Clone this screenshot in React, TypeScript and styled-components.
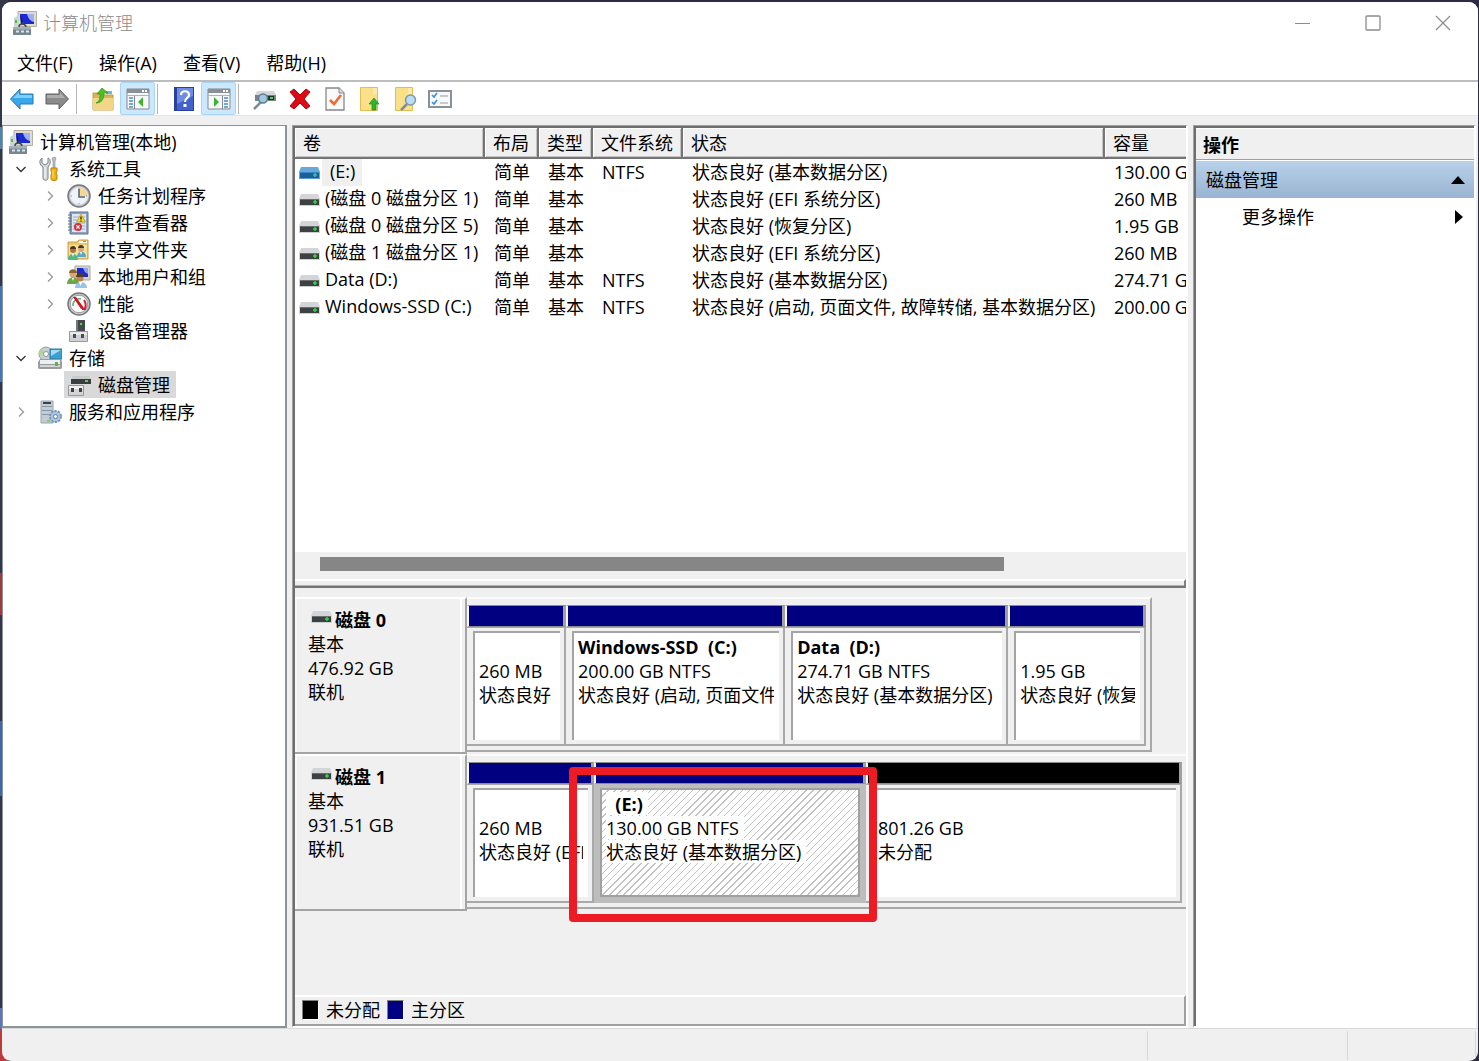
import React from "react";
import styled, { createGlobalStyle, css } from "styled-components";

const GlobalStyle = createGlobalStyle`
  * { box-sizing: border-box; }
  html, body { margin: 0; padding: 0; }
  body {
    font: 18px/24px "Open Sans", "Noto Sans CJK SC", sans-serif;
    color: #000;
    background: #2f3047;
  }
  button {
    font: inherit;
    color: inherit;
    background: none;
    border: 0;
    padding: 0;
    margin: 0;
    text-align: left;
  }
  svg { display: block; flex: none; }
  ul { list-style: none; margin: 0; padding: 0; }
`;

/* ---------- window frame ---------- */

const Desktop = styled.div`
  display: flex;
  min-height: 100vh;
  padding: 2px 1px 0 2px;
  background: linear-gradient(
    #34364c 0 12%, #4a86b4 12% 14%, #34364c 14% 27%, #3c78b8 27% 36%, #34364c 36% 54%,
    #a33a3a 54% 58%, #34364c 58% 68%, #3a68a8 68% 75%, #34364c 75% 95%, #5a78b8 95% 97%, #c03a3a 97%
  ) left / 8px 100% no-repeat, #2b2c42;
`;

const Window = styled.div`
  flex: 1;
  min-width: 0;
  display: flex;
  flex-direction: column;
  background: #f0f0f0;
  border-radius: 9px;
  overflow: hidden;
`;

const TitleBar = styled.header`
  display: flex;
  align-items: center;
  height: 42px;
  padding-left: 11px;
  background: #fff;
`;

const Title = styled.h1`
  flex: 1;
  margin: 0;
  padding-left: 6px;
  font-size: 18px;
  font-weight: 300;
  color: #8c8c8c;
`;

const CaptionButton = styled.button`
  width: 70px;
  height: 42px;
  display: flex;
  align-items: center;
  justify-content: center;
`;

const MenuBar = styled.nav`
  display: flex;
  height: 38px;
  padding: 2px 2px 0;
  background: #fff;
  border-bottom: 2px solid #bdbdbd;
`;

const MenuButton = styled.button`
  padding: 0 13px;
`;

const ToolBar = styled.div`
  display: flex;
  align-items: center;
  height: 34px;
  padding-left: 2px;
  background: #fff;
  border-bottom: 1px solid #e6e6e6;
`;

const ToolButton = styled.button<{ $on?: boolean }>`
  width: 35px;
  height: 33px;
  display: flex;
  align-items: center;
  justify-content: center;
  border-radius: 2px;
  padding-top: 1px;
  ${(p) => p.$on && css`
    background: #cce8ff;
    border: 1px solid #a9d6f8;
  `}
`;

const ToolSeparator = styled.span`
  width: 1px;
  height: 30px;
  margin: 0 8px 0 2px;
  background: #b4b4b4;
`;

const Workspace = styled.main`
  flex: 1;
  display: flex;
  align-items: stretch;
  min-height: 0;
  padding: 9px 2px 0 0;
`;

const StatusBar = styled.footer`
  display: flex;
  height: 33px;
  padding: 2px 2px 1px 0;
  border-top: 1px solid #dadada;
`;

const StatusCell = styled.div<{ $width?: number }>`
  ${(p) => (p.$width ? `width: ${p.$width}px;` : "flex: 1;")}
  border-right: 1px solid #d8d8d8;
`;

/* ---------- tree ---------- */

const TreePane = styled.aside`
  width: 285px;
  flex: none;
  background: #fff;
  border: 2px solid #8e939b;
  border-left-width: 1px;
  border-top-width: 1px;
  padding: 2px 0 0 6px;
`;

const TreeRow = styled.li<{ $level: number }>`
  display: flex;
  align-items: center;
  height: 27px;
  padding-left: ${(p) => (p.$level > 1 ? 29 : 0)}px;
`;

const TreeToggle = styled.button`
  width: 29px;
  height: 27px;
  padding-left: 6px;
  display: flex;
  align-items: center;
`;

const ToggleSpace = styled.span`
  width: 29px;
`;

const TreeLabel = styled.button<{ $selected?: boolean }>`
  display: flex;
  align-items: center;
  gap: 7px;
  height: 27px;
  padding: 0 6px 0 3px;
  margin-left: -3px;
  white-space: nowrap;
  background: ${(p) => (p.$selected ? "#d9d9d9" : "transparent")};
`;

/* ---------- middle pane ---------- */

const Sunken = styled.section`
  border: 1px solid #a0a0a0;
  border-right: 2px solid #fff;
  border-bottom: 2px solid #fff;
  box-shadow: inset 2px 2px 0 #6e6e6e;
  padding: 2px 0 0 2px;
  display: flex;
  flex-direction: column;
`;

const CenterPane = styled(Sunken)`
  flex: 1;
  min-width: 0;
  margin: 0 5px;
`;

const ListArea = styled.div`
  height: 424px;
  overflow: hidden;
  background: #fff;
`;

const VolumeTable = styled.table`
  table-layout: fixed;
  width: 960px;
  border-collapse: separate;
  border-spacing: 0;
`;

const HeadCell = styled.th`
  height: 31px;
  padding: 0 0 0 8px;
  font-weight: 400;
  text-align: left;
  white-space: nowrap;
  background: #f0f0f0;
  border-right: 2px solid #757575;
  border-bottom: 2px solid #757575;
  box-shadow: inset 1px 1px 0 #fff, inset -1px -1px 0 #c4c4c4;
`;

const Cell = styled.td`
  height: 27px;
  padding: 0 0 2px 9px;
  white-space: nowrap;
`;

const NameCell = styled(Cell)`
  padding: 0 0 0 4px;
`;

const VolumeName = styled.span<{ $selected?: boolean }>`
  display: flex;
  align-items: center;
  height: 27px;
  gap: 2px;

  span {
    padding: 0 7px 3px ${(p) => (p.$selected ? 8 : 3)}px;
    background: ${(p) => (p.$selected ? "#f0f0f0" : "transparent")};
  }
`;

const ScrollTrack = styled.div`
  height: 27px;
  padding: 5px 182px 0 25px;
`;

const ScrollThumb = styled.div`
  height: 14px;
  background: #868686;
`;

const Splitter = styled.div`
  height: 9px;
  border-top: 2px solid #fff;
  border-right: 2px solid #808080;
  border-bottom: 2px solid #757575;
  box-shadow: inset 0 -1px 0 #b0b0b0;
`;

const DiskArea = styled.div`
  flex: 1;
  padding-top: 9px;
`;

const DiskRow = styled.article`
  display: flex;
  height: 157px;
`;

const DiskLabel = styled.div`
  width: 172px;
  flex: none;
  padding: 9px 0 0 13px;
  border-top: 2px solid #fff;
  border-bottom: 2px solid #a4a4a4;
  border-right: 2px solid #a4a4a4;
  box-shadow: inset 2px 0 0 #fafafa, inset -3px 0 0 #f0f0f0, inset -5px 0 0 #fff;
`;

const DiskName = styled.h2`
  display: flex;
  align-items: center;
  gap: 3px;
  margin: 0;
  padding-left: 3px;
  font-size: 18px;
  line-height: 24px;
  font-weight: 700;

  svg { margin-bottom: 6px; }
`;

const Line = styled.div`
  height: 24px;
  white-space: pre;
`;

const TrackSlot = styled.div`
  flex: 1;
  min-width: 0;
  display: flex;
`;

const TrackRest = styled.div<{ $share: number }>`
  flex: ${(p) => p.$share} 1 0;
`;

const Track = styled.div<{ $share: number; $closed?: boolean }>`
  display: flex;
  flex: ${(p) => p.$share} 1 0;
  min-width: 0;
  height: 155px;
  padding: 6px 4px 4px 0;
  border-top: 2px solid #fbfbfb;
  border-bottom: 2px solid #a8a8a8;
  border-right: ${(p) => (p.$closed ? "2px solid #a8a8a8" : "0")};
`;

const Partition = styled.div<{ $share: number }>`
  position: relative;
  flex: ${(p) => p.$share} 1 0;
  min-width: 0;
  display: flex;
  flex-direction: column;
`;

const PartitionBar = styled.div<{ $color: string }>`
  height: 22px;
  flex: none;
  background: ${(p) => p.$color};
  border: 1px solid #8c8c8c;
  border-left: 2px solid #f7f7f7;
  border-right: 3px solid #a0a0a0;
`;

const PartitionBody = styled.div<{ $selected?: boolean }>`
  flex: 1;
  min-height: 0;
  display: flex;
  padding: 3px 4px 4px 6px;
  border-top: 1px solid #a8a8a8;
  border-right: 2px solid #a8a8a8;
  border-bottom: 2px solid #a8a8a8;
  background: #f0f0f0;
  ${(p) => p.$selected && css`
    background: #bdbdbd;
    border-color: #bdbdbd;
  `}
`;

const PartitionFace = styled.div<{ $selected?: boolean }>`
  flex: 1;
  min-width: 0;
  padding: 2px 5px 0 4px;
  background: #fff;
  border-top: 2px solid #a4a4a4;
  border-left: 2px solid #a4a4a4;
  ${(p) => p.$selected && css`
    border: 2px solid #a0a0a0;
    background: repeating-linear-gradient(135deg, #fff 0 4px, #c2c2c2 4px 5px);
  `}
`;

const PartitionText = styled.div<{ $selected?: boolean }>`
  overflow: hidden;

  span { background: ${(p) => (p.$selected ? "#fff" : "transparent")}; }
  ${(p) => p.$selected && css`
    span { display: inline-block; height: 23px; padding-right: 5px; line-height: 24px; }
  `}
`;

const Strong = styled.strong`
  font-weight: 700;
`;

/* Hand-drawn marker laid over the highlighted partition. */
const Marker = styled.div`
  position: absolute;
  z-index: 2;
  inset: 5px -11px -19px -25px;
  border: 8px solid #ed1c24;
  border-radius: 4px;
  pointer-events: none;
`;

const Legend = styled.div`
  display: flex;
  align-items: center;
  gap: 7px;
  height: 31px;
  padding: 0 0 1px 7px;
  border-top: 2px solid #fff;
  border-right: 2px solid #a0a0a0;
  border-bottom: 2px solid #a0a0a0;
`;

const Swatch = styled.span<{ $color: string }>`
  width: 17px;
  height: 20px;
  background: ${(p) => p.$color};
  border: 1px solid #808080;
  border-right-color: #fff;
  border-bottom-color: #fff;
`;

/* ---------- actions pane ---------- */

const ActionsPane = styled(Sunken)`
  width: 283px;
  flex: none;
  background: #fff;
`;

const ActionsTitle = styled.h2`
  margin: 0;
  height: 32px;
  padding: 4px 0 0 7px;
  font-size: 18px;
  line-height: 24px;
  font-weight: 700;
  background: #f0f0f0;
  border-top: 1px solid #fff;
  border-bottom: 1px solid #a0a0a0;
`;

const ActionGroup = styled.button`
  display: flex;
  align-items: center;
  justify-content: space-between;
  height: 37px;
  margin-top: 1px;
  padding: 1px 9px 0 10px;
  background: linear-gradient(#b9d1ea, #99b4d1);
`;

const ActionItem = styled.button`
  display: flex;
  align-items: center;
  justify-content: space-between;
  height: 36px;
  padding: 1px 11px 0 46px;
`;

/* ---------- icons ---------- */

type IconProps = { children: React.ReactNode; w?: number; h?: number };
const Icon = ({ children, w = 24, h = 24 }: IconProps) => (
  <svg width={w} height={h} viewBox={`0 0 ${w} ${h}`} aria-hidden="true">{children}</svg>
);

const ComputerIcon = () => (
  <Icon>
    <path d="M5 .5h18.500v15H8l-3-2z" fill="#dedbcf" stroke="#b3b0a6" />
    <path d="M7 3h14v10H8z" fill="#1a2ad0" />
    <path d="M14 3h7v8c-4-1-6-4-7-8z" fill="#9db0f6" />
    <path d="M7 3l4 10H8z" fill="#0c1490" />
    <path d="M1 7l5-3v12H1z" fill="#cdd3d7" />
    <path d="M2 9h2v3H2z" fill="#4fc62c" />
    <path d="M6 16c0-4 6-4 7 0M9 11l4 4" fill="none" stroke="#3a4650" strokeWidth="1.500" />
    <path d="M0 16h18v8H0z" fill="#768791" />
    <path d="M0 16h18v2.500H0z" fill="#a5b1b9" />
    <path d="M3 19.500h3v2H3zm5 0h3v2H8zm5 0h3v2h-3z" fill="#dce3e7" />
  </Icon>
);

const ToolsIcon = () => (
  <Icon>
    <path d="M4 1v5l3 2 3-2V1c3 1 3 6 0 9v11c0 3-5 3-5 0V10C1 8 1 3 4 1z" fill="#d5d8da" stroke="#7c8286" />
    <path d="M7 10v11" stroke="#f7f8f8" />
    <path d="M15 0h2l1 2-1 2v7h-2V4l-1-2z" fill="#b9bec2" stroke="#868b8f" strokeWidth=".6" />
    <path d="M13 11h6v3l-1 2 1 2v4c0 2-6 2-6 0v-4l1-2-1-2z" fill="#f2b211" stroke="#bd8106" />
    <path d="M15 13v8" stroke="#ffe48a" />
  </Icon>
);

const ClockIcon = () => (
  <Icon>
    <circle cx="12" cy="12" r="11" fill="#b9bcc0" stroke="#777b80" strokeWidth="1.5" />
    <circle cx="12" cy="12" r="8.8" fill="#edf3f8" stroke="#dfe2e5" />
    <path d="M12 3.5a8.5 8.5 0 0 1 8.5 8.5H12z" fill="#f6d896" />
    <path d="M12 5v8h6" fill="none" stroke="#5a636c" strokeWidth="1.6" />
    <path d="M12 4v1m0 14v1m-8-8h1m14 0h1" stroke="#888" />
  </Icon>
);

const EventIcon = () => (
  <Icon>
    <path d="M3 1h18v22H3z" fill="#8fa3bf" stroke="#5f7596" />
    <path d="M5 3h14v18H5z" fill="#dce6f1" />
    <path d="M6 6h12M6 9h12M6 12h12M6 15h12M6 18h12" stroke="#9cb2cb" />
    <path d="M1 4h4M1 7h4M1 10h4M1 13h4M1 16h4M1 19h4" stroke="#66717d" />
    <path d="M14 3l4.500 8h-9z" fill="#ffd21e" stroke="#c49a0b" strokeWidth=".7" />
    <path d="M14 5.500v3m0 1v1" stroke="#222" strokeWidth="1.300" />
    <circle cx="11" cy="16" r="4" fill="#d6303a" />
    <path d="M9.400 14.400l3.200 3.200m0-3.200l-3.200 3.200" stroke="#fff" strokeWidth="1.300" />
  </Icon>
);

const SharedFolderIcon = () => (
  <Icon>
    <path d="M1 4h9l2-2h9v19H1z" fill="#ecc768" stroke="#cba14a" />
    <path d="M12 3h8v2h-8z" fill="#fff" />
    <path d="M16 3h3v1h-3z" fill="#4f9ae0" />
    <path d="M2 7h18v13H2z" fill="#f8df98" />
    <circle cx="6" cy="12" r="3" fill="#a8743f" />
    <path d="M3 11c0-4 6-4 6 0z" fill="#4a3420" />
    <path d="M1 22c0-8 10-8 10 0z" fill="#52b788" />
    <circle cx="14" cy="11" r="3" fill="#d8a878" />
    <path d="M11 10c0-4 6-4 6 0z" fill="#3f3a38" />
    <path d="M10 19c0-7 9-7 9 0z" fill="#5aa6c9" />
    <path d="M5 16l1 3 1-3zm8-2l1 3 1-3z" fill="#fff" />
  </Icon>
);

const UsersIcon = () => (
  <Icon>
    <path d="M8 1h15v14H8z" fill="#d9d6c9" stroke="#aaa79b" />
    <path d="M10 3h11v9H10z" fill="#1b2bcc" />
    <path d="M16 3h5v6c-3-1-4-3-5-6z" fill="#8ba2f0" />
    <circle cx="6" cy="9" r="3.600" fill="#d9a774" />
    <path d="M2 8c0-5 8-5 8 0z" fill="#8a6431" />
    <path d="M0 19c0-9 12-9 12 0z" fill="#6aa84a" />
    <circle cx="13" cy="13" r="3.600" fill="#b98250" />
    <path d="M9 12c0-5 8-5 8 0z" fill="#5a3a1e" />
    <path d="M8 23c0-8 12-8 12 0z" fill="#9cc3ea" />
    <path d="M5 13l1 3 1-3zm7 4l1.500 4 1.500-4z" fill="#fff" />
  </Icon>
);

const GaugeIcon = () => (
  <Icon>
    <circle cx="12" cy="12" r="11" fill="#c9cbcd" stroke="#75787c" strokeWidth="1.500" />
    <circle cx="12" cy="12" r="8.700" fill="#fff" stroke="#9a9da0" />
    <path d="M6 14a6.500 6.500 0 0 1 8-7" fill="none" stroke="#69a97e" strokeWidth="1.500" />
    <path d="M17 8c2 3 2 6 1 9h-3" fill="none" stroke="#c6252b" strokeWidth="2" />
    <path d="M6 5l3 0 8 11-3 1z" fill="#d3141c" />
  </Icon>
);

const DeviceIcon = () => (
  <Icon>
    <path d="M9 1h9v12H9z" fill="#45494c" />
    <path d="M9 1h2v12H9z" fill="#74787b" />
    <path d="M13 4h2v2h-2z" fill="#4be04b" />
    <path d="M2.500 12.500h18v10h-18z" fill="#cfd1d4" stroke="#97999d" />
    <path d="M3 13h17v3H3z" fill="#e9eaeb" />
    <path d="M6 15h3v4H6zm8 0h3v4h-3z" fill="#4a4d50" />
  </Icon>
);

const StorageIcon = () => (
  <Icon>
    <circle cx="8" cy="8" r="7" fill="#c9ced2" stroke="#969ba0" />
    <path d="M8 8L3 3a7 7 0 0 0-2 6z" fill="#a9d98c" />
    <circle cx="8" cy="8" r="2.500" fill="#fff" stroke="#8d9296" />
    <path d="M12 3h12v10H12z" fill="#3f9fcf" stroke="#27799f" />
    <path d="M13 4h10l-10 6z" fill="#a3dcf5" />
    <path d="M2 13h21l1 3v5c0 2-1 2-2 2H2c-2 0-2-1-2-2v-5z" fill="#9a9da0" />
    <path d="M2 14h20v4H2z" fill="#eceeef" />
    <path d="M2 19h20v2H2z" fill="#d2d5d7" />
    <path d="M17 16h3v4h-3z" fill="#54bf2e" />
  </Icon>
);

const DiskMgmtIcon = () => (
  <Icon>
    <path d="M6 3h16l2 3H4z" fill="#c9cbcd" />
    <path d="M4 6h20v5H4z" fill="#3b3e40" />
    <path d="M18 7h3v2h-3z" fill="#43dc43" />
    <path d="M1.500 12.500h15v10h-15z" fill="#d3d4d6" stroke="#97999d" />
    <path d="M2 13h14v3H2z" fill="#f0f0f1" />
    <path d="M4 15h3v4H4zm8 0h3v4h-3z" fill="#3f4245" />
  </Icon>
);

const ServicesIcon = () => (
  <Icon>
    <path d="M3 1h12v22H3z" fill="#c3ccd3" stroke="#98a5af" />
    <path d="M5 2h8v2H5z" fill="#38424a" />
    <path d="M4 6h10v1H4zm0 4h10v1H4zm0 4h8v1H4z" fill="#8796a3" />
    <path d="M9 20h3v2H9z" fill="#7bdc42" />
    <circle cx="17.500" cy="16.500" r="5.500" fill="#a9c4de" stroke="#7295b8" strokeWidth="2" strokeDasharray="2.300 1.150" />
    <circle cx="17.500" cy="16.500" r="4.500" fill="#a9c4de" />
    <circle cx="17.500" cy="16.500" r="2" fill="#fff" stroke="#5c7fa3" />
  </Icon>
);

const DriveIcon = ({ selected }: { selected?: boolean }) => (
  <Icon w={21} h={14}>
    <path d="M2 1h17l2 5v6H0V6z" fill={selected ? "#66a8dc" : "#d3d5d8"} />
    <path d="M1 6h19v6H1z" fill={selected ? "#1c5f97" : "#3e4144"} />
    <path d="M1 6h19v1H1z" fill={selected ? "#3a86c4" : "#6b6e71"} />
    <path d="M0 12h21v1H0z" fill={selected ? "#5b9bd0" : "#cdd0d3"} />
    <path d="M14 9h4M16 7v4" stroke={selected ? "#32c3a1" : "#35d53a"} strokeWidth="1.500" />
  </Icon>
);

const ArrowIcon = ({ forward }: { forward?: boolean }) => (
  <Icon>
    <path
      d={forward ? "M23.500 12L14 2v5H1v10h13v5z" : "M.5 12L10 2v5h13v10H10v5z"}
      fill={forward ? "#8b8b8b" : "#35a7ea"}
      stroke={forward ? "#5e5e5e" : "#2478b8"}
      strokeLinejoin="round"
    />
    <path
      d={forward ? "M2 8h13V5l5 6H2z" : "M22 8H9V5l-6 6h19z"}
      fill={forward ? "#adadad" : "#7fd0f8"}
    />
  </Icon>
);

const FolderUpIcon = () => (
  <Icon>
    <path d="M2 6h8l2 2h10v15H2z" fill="#d9b45a" stroke="#c39c42" />
    <path d="M2 11h20v12H2z" fill="#f3d588" />
    <path d="M15 4h6v3h-6z" fill="#69b5e8" />
    <path d="M5 16c4-2 4-5 4-9H6l5-6 6 5h-4c0 7-3 10-8 10z" fill="#4fc024" stroke="#2f9112" strokeWidth=".7" />
  </Icon>
);

const PaneIcon = ({ right }: { right?: boolean }) => (
  <Icon>
    <path d="M1 2h22v20H1z" fill="#f7f8f9" stroke="#85898e" />
    <path d="M1 2h22v4H1z" fill="#8b9096" />
    <path d="M16 3h2v2h-2zm3 0h2v2h-2z" fill="#fff" />
    <path d="M1 8h22v1H1z" fill="#aeb3b8" />
    <path d={right ? "M15.500 9v13" : "M8.500 9v13"} stroke="#85898e" />
    <path d={right ? "M17 11h4m-4 3h4m-4 3h4m-4 3h4" : "M3 11h4m-4 3h4m-4 3h4m-4 3h4"} stroke="#4a8ccc" strokeWidth="1.300" />
    <path d={right ? "M7 10l5 5-5 5z" : "M17 10l-5 5 5 5z"} fill="#3fb52c" />
  </Icon>
);

const HelpIcon = () => (
  <Icon>
    <path d="M2 0h20v24H2z" fill="#2b3f9c" />
    <path d="M5 1h16v22H5z" fill="#3f62cc" />
    <path d="M5 1h16v8L5 17z" fill="#6f8de4" />
    <path d="M9 8c0-5 8-5 8 0 0 3-4 3-4 7" fill="none" stroke="#fff" strokeWidth="2.200" />
    <path d="M11.500 17h3v3h-3z" fill="#fff" />
  </Icon>
);

const DriveSearchIcon = () => (
  <Icon>
    <path d="M4 4h17l2 4H2z" fill="#d5d7d9" />
    <path d="M2 8h21v6H2z" fill="#7c8185" />
    <path d="M15 9h6v4h-6z" fill="#2a2d2f" />
    <path d="M17 11h3" stroke="#35e23a" strokeWidth="2" />
    <path d="M1 22l7-7" stroke="#7d8c99" strokeWidth="2.500" />
    <circle cx="10" cy="11.500" r="4.500" fill="#9fc7e3" stroke="#5f7c92" strokeWidth="1.500" />
  </Icon>
);

const DeleteIcon = () => (
  <Icon>
    <path d="M2 5l4-3 6 6 6-6 4 3-6 7 6 7-4 3-6-6-6 6-4-3 6-7z" fill="#dc0a14" stroke="#b5060d" strokeLinejoin="round" />
  </Icon>
);

const CheckPageIcon = () => (
  <Icon>
    <path d="M3 1h13l5 5v17H3z" fill="#fafafa" stroke="#84878a" strokeWidth="1.300" />
    <path d="M16 1v5h5" fill="#ddd" stroke="#84878a" />
    <path d="M7 13l4 4 7-9" fill="none" stroke="#ee6a32" strokeWidth="2.600" />
  </Icon>
);

const PageUpIcon = () => (
  <Icon>
    <path d="M2.500 .5h17v23h-17z" fill="#fbe08a" stroke="#e2bd52" />
    <path d="M15 1h4v6h-4z" fill="#fdebae" />
    <path d="M16 11l5 6h-3v6h-4v-6h-3z" fill="#2cb52c" stroke="#1b8e1c" strokeWidth=".7" />
  </Icon>
);

const PageFindIcon = () => (
  <Icon>
    <path d="M2.500 .5h17v23h-17z" fill="#fbe08a" stroke="#e2bd52" />
    <path d="M15 1h4v6h-4z" fill="#fdebae" />
    <path d="M8 23l6-6" stroke="#7f8d99" strokeWidth="2.500" />
    <circle cx="17.500" cy="13" r="5" fill="#b9def3" stroke="#7e99ad" strokeWidth="1.500" />
  </Icon>
);

const ChecklistIcon = () => (
  <Icon>
    <path d="M1 4h22v16H1z" fill="#f8f9fa" stroke="#8a9097" strokeWidth="2" />
    <path d="M0 3h24v2H0z" fill="#8c9198" />
    <path d="M4 8l2 2 3-4M4 15l2 2 3-4" fill="none" stroke="#3a8fd6" strokeWidth="1.600" />
    <path d="M12 9h8M12 16h8" stroke="#b6babe" strokeWidth="1.500" />
  </Icon>
);

const Chevron = ({ open }: { open: boolean }) => (
  <Icon w={12} h={12}>
    <path
      d={open ? "M1.500 4L6 8.500 10.500 4" : "M4 1.500L8.500 6 4 10.500"}
      fill="none"
      stroke={open ? "#333" : "#999"}
      strokeWidth="1.300"
    />
  </Icon>
);

/* ---------- data ---------- */

type Node = {
  label: string;
  level: number;
  icon: React.ReactNode;
  open?: boolean;
  selected?: boolean;
};

const nodes: Node[] = [
  { label: "计算机管理(本地)", level: 0, icon: <ComputerIcon /> },
  { label: "系统工具", level: 1, icon: <ToolsIcon />, open: true },
  { label: "任务计划程序", level: 2, icon: <ClockIcon />, open: false },
  { label: "事件查看器", level: 2, icon: <EventIcon />, open: false },
  { label: "共享文件夹", level: 2, icon: <SharedFolderIcon />, open: false },
  { label: "本地用户和组", level: 2, icon: <UsersIcon />, open: false },
  { label: "性能", level: 2, icon: <GaugeIcon />, open: false },
  { label: "设备管理器", level: 2, icon: <DeviceIcon /> },
  { label: "存储", level: 1, icon: <StorageIcon />, open: true },
  { label: "磁盘管理", level: 2, icon: <DiskMgmtIcon />, selected: true },
  { label: "服务和应用程序", level: 1, icon: <ServicesIcon />, open: false },
];

const columns = [
  { label: "卷", width: 190 },
  { label: "布局", width: 54 },
  { label: "类型", width: 54 },
  { label: "文件系统", width: 90 },
  { label: "状态", width: 422 },
  { label: "容量", width: 150 },
];

const volumes = [
  ["(E:)", "NTFS", "状态良好 (基本数据分区)", "130.00 GB"],
  ["(磁盘 0 磁盘分区 1)", "", "状态良好 (EFI 系统分区)", "260 MB"],
  ["(磁盘 0 磁盘分区 5)", "", "状态良好 (恢复分区)", "1.95 GB"],
  ["(磁盘 1 磁盘分区 1)", "", "状态良好 (EFI 系统分区)", "260 MB"],
  ["Data (D:)", "NTFS", "状态良好 (基本数据分区)", "274.71 GB"],
  ["Windows-SSD (C:)", "NTFS", "状态良好 (启动, 页面文件, 故障转储, 基本数据分区)", "200.00 GB"],
];

const NAVY = "#000080";

type Part = { share: number; color: string; lines: [string, string, string]; selected?: boolean };
type Disk = { name: string; size: string; share: number; rest: number; parts: Part[] };

const disks: Disk[] = [
  {
    name: "磁盘 0",
    size: "476.92 GB",
    share: 686,
    rest: 34,
    parts: [
      { share: 99, color: NAVY, lines: ["", "260 MB", "状态良好"] },
      { share: 219, color: NAVY, lines: ["Windows-SSD  (C:)", "200.00 GB NTFS", "状态良好 (启动, 页面文件"] },
      { share: 223, color: NAVY, lines: ["Data  (D:)", "274.71 GB NTFS", "状态良好 (基本数据分区)"] },
      { share: 138, color: NAVY, lines: ["", "1.95 GB", "状态良好 (恢复"] },
    ],
  },
  {
    name: "磁盘 1",
    size: "931.51 GB",
    share: 720,
    rest: 0,
    parts: [
      { share: 127, color: NAVY, lines: ["", "260 MB", "状态良好 (EFI"] },
      { share: 272, color: NAVY, lines: ["  (E:)", "130.00 GB NTFS", "状态良好 (基本数据分区)"], selected: true },
      { share: 316, color: "#000", lines: ["", "801.26 GB", "未分配"] },
    ],
  },
];

/* ---------- view ---------- */

const tools: (null | { label: string; icon: React.ReactNode; on?: boolean })[] = [
  { label: "后退", icon: <ArrowIcon /> },
  { label: "前进", icon: <ArrowIcon forward /> },
  null,
  { label: "上移", icon: <FolderUpIcon /> },
  { label: "控制台树", icon: <PaneIcon />, on: true },
  null,
  { label: "帮助", icon: <HelpIcon /> },
  { label: "操作窗格", icon: <PaneIcon right />, on: true },
  null,
  { label: "重新扫描磁盘", icon: <DriveSearchIcon /> },
  { label: "删除", icon: <DeleteIcon /> },
  { label: "属性", icon: <CheckPageIcon /> },
  { label: "上级页面", icon: <PageUpIcon /> },
  { label: "查找", icon: <PageFindIcon /> },
  { label: "列表", icon: <ChecklistIcon /> },
];

function DiskView({ disk }: { disk: Disk }) {
  return (
    <DiskRow>
      <DiskLabel>
        <DiskName><DriveIcon />{disk.name}</DiskName>
        <Line>基本</Line>
        <Line>{disk.size}</Line>
        <Line>联机</Line>
      </DiskLabel>
      <TrackSlot>
        <Track $share={disk.share} $closed={disk.rest > 0}>
          {disk.parts.map((part, i) => (
            <Partition key={i} $share={part.share}>
              <PartitionBar $color={part.color} />
              <PartitionBody $selected={part.selected}>
                <PartitionFace $selected={part.selected}>
                  <PartitionText $selected={part.selected}>
                    <Line>{part.lines[0] && <Strong><span>{part.lines[0]}</span></Strong>}</Line>
                    <Line><span>{part.lines[1]}</span></Line>
                    <Line><span>{part.lines[2]}</span></Line>
                  </PartitionText>
                </PartitionFace>
              </PartitionBody>
              {part.selected && <Marker />}
            </Partition>
          ))}
        </Track>
        {disk.rest > 0 && <TrackRest $share={disk.rest} />}
      </TrackSlot>
    </DiskRow>
  );
}

export default function App() {
  return (
    <>
      <GlobalStyle />
      <Desktop>
        <Window>
          <TitleBar>
            <ComputerIcon />
            <Title>计算机管理</Title>
            <CaptionButton aria-label="最小化">
              <Icon w={16} h={16}><path d="M0 8.500h15" stroke="#8c8c8c" /></Icon>
            </CaptionButton>
            <CaptionButton aria-label="最大化">
              <Icon w={16} h={16}><rect x="1" y="1" width="14" height="14" rx="1" fill="none" stroke="#8c8c8c" strokeWidth="1.300" /></Icon>
            </CaptionButton>
            <CaptionButton aria-label="关闭">
              <Icon w={16} h={16}><path d="M1 1l14 14M15 1L1 15" stroke="#8c8c8c" strokeWidth="1.200" /></Icon>
            </CaptionButton>
          </TitleBar>
          <MenuBar>
            {["文件(F)", "操作(A)", "查看(V)", "帮助(H)"].map((m) => (
              <MenuButton key={m}>{m}</MenuButton>
            ))}
          </MenuBar>
          <ToolBar>
            {tools.map((t, i) =>
              t ? (
                <ToolButton key={i} aria-label={t.label} $on={t.on}>{t.icon}</ToolButton>
              ) : (
                <ToolSeparator key={i} />
              )
            )}
          </ToolBar>
          <Workspace>
            <TreePane>
              <ul>
                {nodes.map((n) => (
                  <TreeRow key={n.label} $level={n.level}>
                    {n.open !== undefined ? (
                      <TreeToggle aria-label={n.open ? "折叠" : "展开"}><Chevron open={n.open} /></TreeToggle>
                    ) : (
                      n.level > 0 && <ToggleSpace />
                    )}
                    <TreeLabel $selected={n.selected}>{n.icon}{n.label}</TreeLabel>
                  </TreeRow>
                ))}
              </ul>
            </TreePane>
            <CenterPane>
              <ListArea>
                <VolumeTable>
                  <colgroup>
                    {columns.map((c) => <col key={c.label} width={c.width} />)}
                  </colgroup>
                  <thead>
                    <tr>{columns.map((c) => <HeadCell key={c.label}>{c.label}</HeadCell>)}</tr>
                  </thead>
                  <tbody>
                    {volumes.map(([name, fs, status, size], i) => (
                      <tr key={name}>
                        <NameCell>
                          <VolumeName $selected={i === 0}>
                            <DriveIcon selected={i === 0} /><span>{name}</span>
                          </VolumeName>
                        </NameCell>
                        <Cell>简单</Cell>
                        <Cell>基本</Cell>
                        <Cell>{fs}</Cell>
                        <Cell>{status}</Cell>
                        <Cell>{size}</Cell>
                      </tr>
                    ))}
                  </tbody>
                </VolumeTable>
              </ListArea>
              <ScrollTrack><ScrollThumb /></ScrollTrack>
              <Splitter />
              <DiskArea>
                {disks.map((d) => <DiskView key={d.name} disk={d} />)}
              </DiskArea>
              <Legend>
                <Swatch $color="#000" />未分配
                <Swatch $color={NAVY} />主分区
              </Legend>
            </CenterPane>
            <ActionsPane>
              <ActionsTitle>操作</ActionsTitle>
              <ActionGroup>
                磁盘管理
                <Icon w={14} h={8}><path d="M7 0l7 8H0z" /></Icon>
              </ActionGroup>
              <ActionItem>
                更多操作
                <Icon w={8} h={14}><path d="M0 0l8 7-8 7z" /></Icon>
              </ActionItem>
            </ActionsPane>
          </Workspace>
          <StatusBar>
            <StatusCell />
            <StatusCell $width={200} />
            <StatusCell $width={128} />
          </StatusBar>
        </Window>
      </Desktop>
    </>
  );
}
